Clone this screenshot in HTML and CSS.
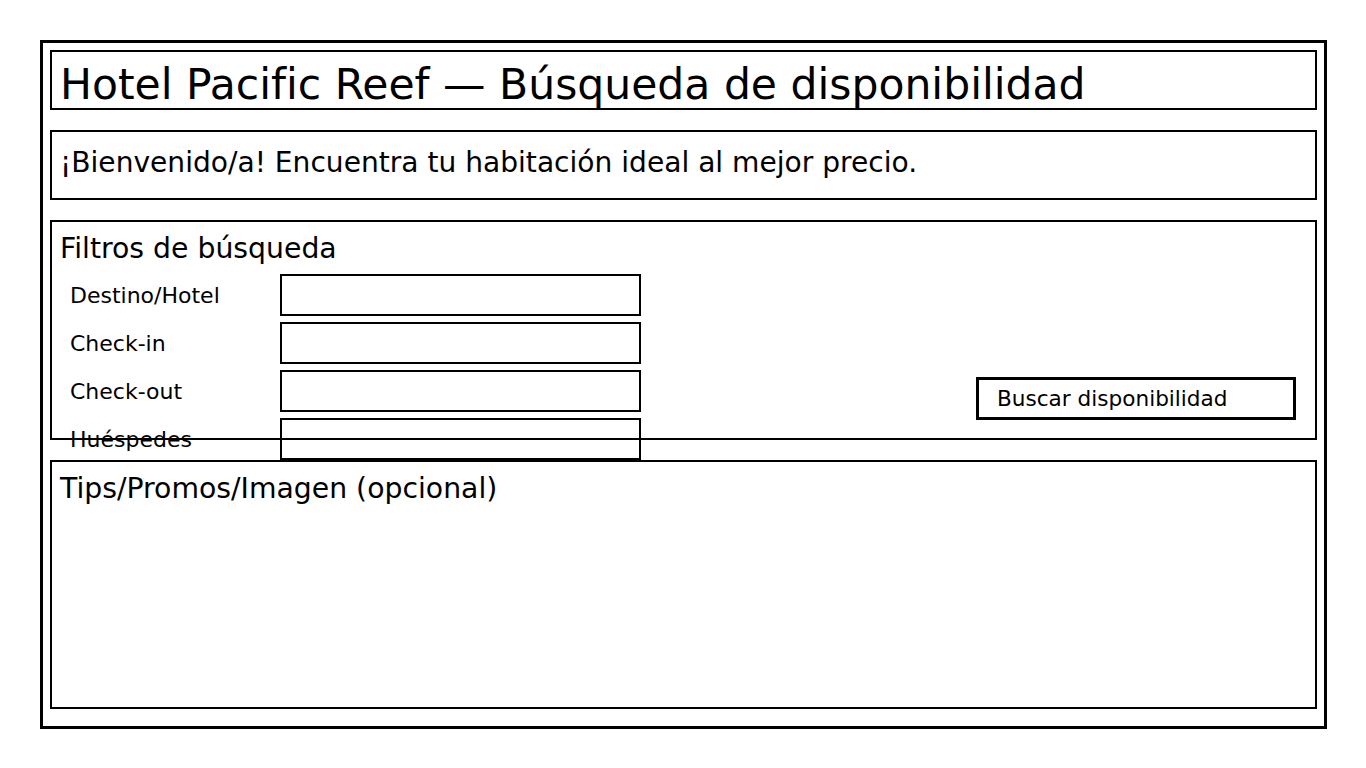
FILE: index.html
```html
<!DOCTYPE html>
<html lang="es">
<head>
<meta charset="utf-8">
<title>Hotel Pacific Reef — Búsqueda de disponibilidad</title>
<link rel="stylesheet" href="styles.css">
</head>
<body>
<div class="frame">
  <header class="panel title-panel">
    <h1 class="title">Hotel Pacific Reef — Búsqueda de disponibilidad</h1>
  </header>
  <section class="panel welcome-panel">
    <p class="welcome">¡Bienvenido/a! Encuentra tu habitación ideal al mejor precio.</p>
  </section>
  <section class="panel filters-panel">
    <div class="filters-form">
      <h2 class="section-title">Filtros de búsqueda</h2>
      <div class="rows">
        <div class="row"><span class="label">Destino/Hotel</span><div class="field"></div></div>
        <div class="row"><span class="label">Check-in</span><div class="field"></div></div>
        <div class="row"><span class="label">Check-out</span><div class="field"></div></div>
        <div class="row"><span class="label">Huéspedes</span><div class="field"></div></div>
      </div>
    </div>
    <div class="search-btn">Buscar disponibilidad</div>
  </section>
  <section class="panel tips-panel">
    <h2 class="section-title">Tips/Promos/Imagen (opcional)</h2>
  </section>
</div>
</body>
</html>
```

FILE: styles.css
```css
* { box-sizing: border-box; }

html, body {
  margin: 0;
  padding: 0;
  background: #ffffff;
}

body {
  font-family: "DejaVu Sans", "Liberation Sans", sans-serif;
  color: #000000;
}

.frame {
  margin: 40px 0 0 40px;
  width: 1287px;
  height: 689px;
  border: 3px solid #000;
  padding: 7px 7px 17px 7px;
  display: flex;
  flex-direction: column;
  gap: 20px;
}

.panel {
  border: 2px solid #000;
  width: 100%;
  flex-shrink: 0;
}

.title-panel {
  height: 60px;
  padding: 0 8px;
}

.title {
  margin: 0;
  font-weight: normal;
  font-size: 42.5px;
  line-height: 66px;
  white-space: nowrap;
}

.welcome-panel {
  height: 70px;
  padding: 0 8px;
}

.welcome {
  margin: 0;
  font-size: 28.1px;
  line-height: 62px;
  white-space: nowrap;
}

.filters-panel {
  height: 220px;
  padding: 0 8px;
  display: flex;
}

.filters-form {
  display: flex;
  flex-direction: column;
}

.section-title {
  margin: 0;
  font-weight: normal;
  font-size: 28.3px;
  line-height: 53px;
  margin-bottom: -1px;
  white-space: nowrap;
}

.rows {
  display: flex;
  flex-direction: column;
  gap: 6px;
  padding-left: 10px;
}

.row {
  display: flex;
  align-items: center;
  height: 42px;
}

.label {
  width: 210px;
  font-size: 22px;
  white-space: nowrap;
}

.field {
  width: 361px;
  height: 42px;
  border: 2px solid #000;
}

.search-btn {
  margin-left: auto;
  align-self: flex-end;
  margin-right: 11px;
  margin-bottom: 18px;
  width: 320px;
  height: 43px;
  border: 3px solid #000;
  padding-left: 18px;
  font-size: 21.6px;
  line-height: 37px;
  white-space: nowrap;
}

.tips-panel {
  flex: 1 1 auto;
  padding: 0 8px;
}
```
